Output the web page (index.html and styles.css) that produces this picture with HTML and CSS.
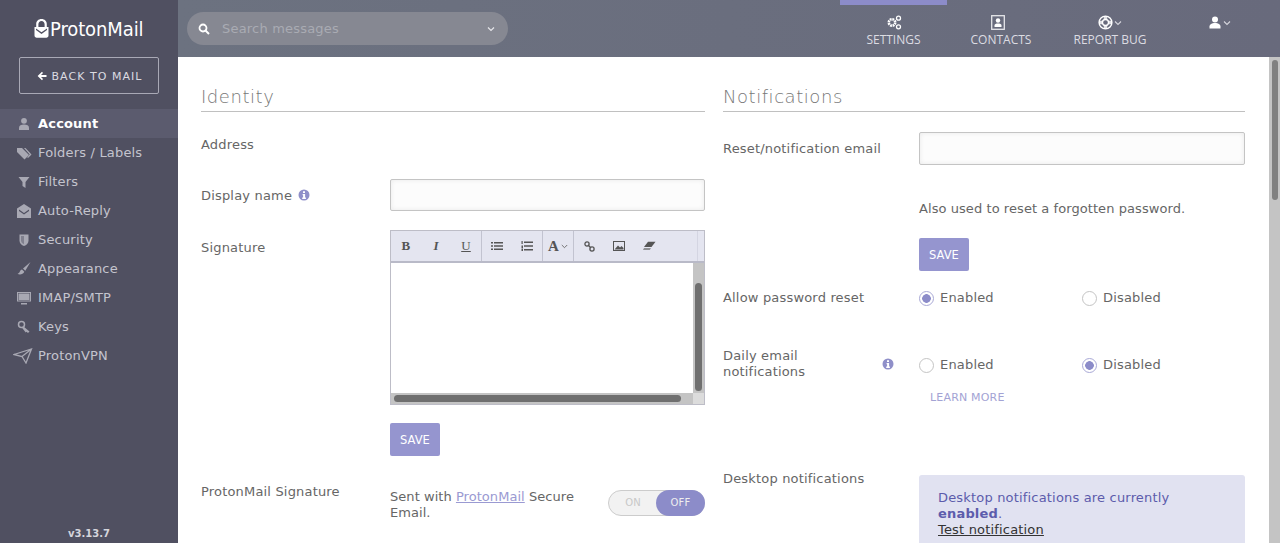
FILE: index.html
```html
<!DOCTYPE html>
<html lang="en">
<head>
    <meta charset="UTF-8">
    <title>ProtonMail Settings</title>
    <link rel="stylesheet" href="styles.css">
</head>
<body>
    <aside class="sidebar">
        <div class="logo">
            <svg class="logo-mark" width="15" height="19" viewBox="0 0 15 19"><path fill="#fff" d="M7.500 0C4.300 0 2.200 2.200 2.200 5.200V8H0.500v8.600C0.500 17.900 1.500 18.800 2.600 18.800h9.800c1.100 0 2.100-.9 2.100-2.200V8h-1.700V5.200C12.800 2.200 10.700 0 7.500 0zM4.400 5.300c0-1.900 1.300-3.200 3.100-3.200s3.100 1.300 3.100 3.200V8H4.400z"/><path fill="#505061" d="M2 9.500l5.500 3.800 5.500-3.800v1.500L7.500 15 2 11z"/></svg>
            <span>ProtonMail</span>
        </div>
        <a class="back-btn"><svg width="10" height="10" viewBox="0 0 10 10"><path fill="#fff" d="M5 .8L.6 5 5 9.200l1-1.200-2-2h5.500V4H4l2-2z"/></svg>BACK TO MAIL</a>
        <nav class="side-nav">
            <a class="side-item active"><svg width="16" height="14" viewBox="0 0 16 14"><circle cx="8" cy="3.800" r="2.900"/><path d="M3 13v-2.300C3 8.500 5.200 7.500 8 7.500s5 1 5 3.200V13z"/></svg>Account</a>
            <a class="side-item"><svg width="16" height="14" viewBox="0 0 16 14"><path d="M1 2h5l7 7-4.500 4.500L1 6z"/><path d="M8 2h1.500l6 6.500-3.500 3.500-.8-.8 2.500-2.700z"/></svg>Folders / Labels</a>
            <a class="side-item"><svg width="16" height="14" viewBox="0 0 16 14"><path d="M2.500 2h11L9.500 7v6l-3-2V7z"/></svg>Filters</a>
            <a class="side-item"><svg width="16" height="14" viewBox="0 0 16 14"><path d="M8 0L1 4.500V14h14V4.500zM3 5.500l5 3.500 5-3.500v1.500L8 10.500 3 7z" fill-rule="evenodd"/></svg>Auto-Reply</a>
            <a class="side-item"><svg width="16" height="14" viewBox="0 0 16 14"><path d="M3.500 1.500h9v6c0 3-2 4.500-4.500 5.500-2.500-1-4.500-2.500-4.500-5.500z"/><path fill="#505061" d="M8 3v8.300c-1.800-1-3-2-3-4V3z" opacity=".45"/></svg>Security</a>
            <a class="side-item"><svg width="16" height="14" viewBox="0 0 16 14"><path d="M14.500 0L7 6.500l2.300 2.300z"/><path d="M6 7.500c-2 .3-2 2.500-3 3.500-.6.600-1.500.8-1.500.8 1.500 1.200 5.500 1.200 6.800-2z"/></svg>Appearance</a>
            <a class="side-item"><svg width="16" height="14" viewBox="0 0 16 14"><path fill-rule="evenodd" d="M1 1h14v9.500H1zM2 2v7.500h12V2z"/><path d="M2.500 2.500h11v6.500h-11zM5 12h6v1.500H5z"/></svg>IMAP/SMTP</a>
            <a class="side-item"><svg width="16" height="14" viewBox="0 0 16 14"><circle cx="5.500" cy="4.500" r="3" fill="none" stroke="#a8a8b3" stroke-width="1.500"/><path d="M7.500 6.500l6 5-1.500 1.500-1.500-1.300-.8.700-3.500-4.500z"/></svg>Keys</a>
            <a class="side-item vpn"><svg width="20" height="16" viewBox="0 0 20 16"><path fill="none" stroke="#a8a8b3" stroke-width="1.300" d="M1 6.500L18.500 1 13 15 9 8.500zM9 8.500L18.500 1"/></svg>ProtonVPN</a>
        </nav>
        <div class="version">v3.13.7</div>
    </aside>

    <div class="right-side">
        <header class="topbar">
            <div class="search">
                <svg width="12" height="12" viewBox="0 0 12 12"><circle cx="5" cy="5" r="3.500" fill="none" stroke="#fff" stroke-width="1.800"/><path d="M7.500 7.500L11 11" stroke="#fff" stroke-width="2"/></svg>
                <span class="search-text">Search messages</span>
                <svg class="caret" width="8" height="6" viewBox="0 0 8 6"><path d="M1 1.500l3 3 3-3" fill="none" stroke="#e6e6ea" stroke-width="1.200"/></svg>
            </div>
            <nav class="top-nav">
                <a class="top-item selected">
                    <span class="top-icon"><svg width="16" height="15" viewBox="0 0 16 15"><circle cx="6" cy="7.500" r="3.200" fill="none" stroke="#fff" stroke-width="2.600" stroke-dasharray="1.800 .7"/><circle cx="12.500" cy="3.200" r="2" fill="none" stroke="#fff" stroke-width="1.300"/><circle cx="12.500" cy="11.800" r="2" fill="none" stroke="#fff" stroke-width="1.300"/></svg></span>
                    SETTINGS
                </a>
                <a class="top-item contacts">
                    <span class="top-icon icon-left"><svg width="14" height="15" viewBox="0 0 14 15"><rect x=".7" y=".7" width="12.600" height="13.600" fill="none" stroke="#e6e6ea" stroke-width="1.300"/><circle cx="7" cy="5.500" r="2.200" fill="#fff"/><path fill="#fff" d="M3.500 12v-1.500C3.500 9 5 8.500 7 8.500s3.500.5 3.500 2V12z"/></svg></span>
                    CONTACTS
                </a>
                <a class="top-item bug">
                    <span class="top-icon"><svg width="15" height="15" viewBox="0 0 15 15"><path d="M5.800 1h3.400v13H5.800zM1 5.800h13v3.400H1z" fill="#fff" opacity=".8"/><circle cx="7.500" cy="7.500" r="6.400" fill="none" stroke="#fff" stroke-width="1.400"/><circle cx="7.500" cy="7.500" r="3" fill="#686a7c" stroke="#fff" stroke-width="1.300"/></svg><svg width="8" height="6" viewBox="0 0 8 6"><path d="M1 1.500l3 3 3-3" fill="none" stroke="#d5d5dc" stroke-width="1.100"/></svg></span>
                    REPORT BUG
                </a>
                <a class="top-item user">
                    <span class="top-icon"><svg width="13" height="13" viewBox="0 0 13 13"><circle cx="6" cy="3.500" r="3" fill="#fff"/><path fill="#fff" d="M.5 12.500v-2c0-2 2.500-3.500 5.500-3.500s5.500 1.500 5.500 3.500v2z"/></svg><svg width="8" height="6" viewBox="0 0 8 6"><path d="M1 1.500l3 3 3-3" fill="none" stroke="#d5d5dc" stroke-width="1.100"/></svg></span>
                </a>
            </nav>
        </header>

        <div class="main-wrap">
            <main class="content">
                <section class="col col-left">
                    <h2>Identity</h2>
                    <div class="row row-address"><label>Address</label></div>
                    <div class="row row-name">
                        <label>Display name <svg class="info" width="12" height="12" viewBox="0 0 12 12"><circle cx="6" cy="6" r="5.500" fill="#8f8fc9"/><path fill="#fff" d="M5 2.200h2v1.700H5zM4.600 5h2.500v3.600h.8V10H4.200V8.600h.9V6.300h-.5z"/></svg></label>
                        <input class="text-input" type="text">
                    </div>
                    <div class="row row-sign">
                        <label>Signature</label>
                        <div>
                            <div class="editor">
                                <div class="toolbar">
                                    <div class="tool-group g1">
                                        <span class="tool tool-b">B</span>
                                        <span class="tool tool-i">I</span>
                                        <span class="tool tool-u">U</span>
                                    </div>
                                    <div class="tool-group g2">
                                        <span class="tool"><svg width="12" height="10" viewBox="0 0 12 10"><path fill="#555" d="M0 1h2v1.500H0zM3 1h9v1.500H3zM0 4.300h2v1.500H0zM3 4.300h9v1.500H3zM0 7.600h2v1.500H0zM3 7.600h9v1.500H3z"/></svg></span>
                                        <span class="tool"><svg width="12" height="12" viewBox="0 0 12 12"><path fill="#555" d="M3 1.500h9V3H3zM3 5.300h9v1.500H3zM3 9h9v1.500H3zM.5 1h1.200v3H.5zM.5 5.500h1.500v3H.5zM.5 9h1.500v2H.5z"/></svg></span>
                                    </div>
                                    <div class="tool-group g3">
                                        <span class="tool tool-a">A<svg width="7" height="5" viewBox="0 0 7 5"><path d="M.8 1l2.700 2.700L6.200 1" fill="none" stroke="#666" stroke-width=".9"/></svg></span>
                                    </div>
                                    <div class="tool-group g4">
                                        <span class="tool"><svg width="11" height="11" viewBox="0 0 11 11"><circle cx="3" cy="3" r="2.100" fill="none" stroke="#555" stroke-width="1.300"/><circle cx="8" cy="8" r="2.100" fill="none" stroke="#555" stroke-width="1.300"/><path d="M4 4l3 3" stroke="#555" stroke-width="1.300"/></svg></span>
                                        <span class="tool"><svg width="12" height="10" viewBox="0 0 12 10"><rect x=".5" y=".5" width="11" height="9" fill="none" stroke="#555"/><path fill="#555" d="M1.500 8.500L5 4.500l2 2 1.500-1.500 2 2v1.500z"/></svg></span>
                                        <span class="tool"><svg width="13" height="10" viewBox="0 0 13 10"><path fill="#555" d="M5 .8h7.500L8.500 6H1z"/><path fill="#555" d="M1 7h7L6.800 9H0z" opacity=".6"/></svg></span>
                                    </div>
                                </div>
                                <div class="edit-box">
                                    <div class="edit-area"></div>
                                    <div class="v-track"><div class="v-thumb"></div></div>
                                </div>
                                <div class="h-bar">
                                    <div class="h-track"><div class="h-thumb"></div></div>
                                    <div class="corner"></div>
                                </div>
                            </div>
                            <button class="save-btn save-sign">SAVE</button>
                        </div>
                    </div>
                    <div class="row row-pm">
                        <label>ProtonMail Signature</label>
                        <div class="pm-sign">
                            <p>Sent with <a class="link">ProtonMail</a> Secure<br>Email.</p>
                            <div class="toggle"><span class="toggle-on">ON</span><span class="toggle-off">OFF</span></div>
                        </div>
                    </div>
                </section>

                <section class="col col-right">
                    <h2>Notifications</h2>
                    <div class="row row-reset">
                        <label>Reset/notification email</label>
                        <div>
                            <input class="text-input" type="text">
                            <p class="hint">Also used to reset a forgotten password.</p>
                            <button class="save-btn">SAVE</button>
                        </div>
                    </div>
                    <div class="row row-allow">
                        <label>Allow password reset</label>
                        <div class="radios">
                            <span class="radio-item"><i class="radio checked"></i>Enabled</span>
                            <span class="radio-item"><i class="radio"></i>Disabled</span>
                        </div>
                    </div>
                    <div class="row row-daily">
                        <label class="daily-label"><span>Daily email notifications</span><svg class="info" width="12" height="12" viewBox="0 0 12 12"><circle cx="6" cy="6" r="5.500" fill="#8f8fc9"/><path fill="#fff" d="M5 2.200h2v1.700H5zM4.600 5h2.500v3.600h.8V10H4.200V8.600h.9V6.300h-.5z"/></svg></label>
                        <div>
                            <div class="radios">
                                <span class="radio-item"><i class="radio"></i>Enabled</span>
                                <span class="radio-item"><i class="radio checked"></i>Disabled</span>
                            </div>
                            <a class="learn">LEARN MORE</a>
                        </div>
                    </div>
                    <div class="row row-desktop">
                        <label>Desktop notifications</label>
                        <div class="notice">
                            Desktop notifications are currently <b>enabled</b>.<br>
                            <a class="test-link">Test notification</a>
                        </div>
                    </div>
                </section>
            </main>
            <div class="page-scroll"><div class="page-thumb"></div></div>
        </div>
    </div>
</body>
</html>
```

FILE: styles.css
```css
* {
    box-sizing: border-box;
}

html, body {
    height: 100%;
}

body {
    margin: 0;
    display: flex;
    overflow: hidden;
    font-family: "DejaVu Sans", sans-serif;
    font-size: 13px;
    letter-spacing: 0.18px;
    color: #666;
    background: #fff;
}

/* sidebar */
.sidebar {
    position: relative;
    width: 178px;
    flex: none;
    background: #505061;
    color: #c4c4ce;
}

.logo {
    display: flex;
    align-items: center;
    gap: 1px;
    height: 57px;
    padding: 0 0 0 34px;
    color: #fff;
    font-size: 20px;
    font-stretch: condensed;
    letter-spacing: -0.1px;
}

.back-btn {
    display: flex;
    align-items: center;
    justify-content: center;
    gap: 4px;
    width: 140px;
    height: 37px;
    margin-left: 19px;
    padding: 1px 0 0 2px;
    border: 1px solid #a9a9b6;
    border-radius: 2px;
    color: #dcdce2;
    font-size: 11px;
    letter-spacing: 1.05px;
}

.side-nav {
    margin-top: 15px;
}

.side-item {
    display: flex;
    align-items: center;
    height: 29px;
    padding-left: 16px;
}

.side-item svg {
    width: 16px;
    margin-right: 6px;
    fill: #a8a8b3;
}

.side-item.active {
    background: #5b5b6e;
    color: #fff;
    font-weight: bold;
}

.side-item.vpn {
    padding-left: 13px;
}

.side-item.vpn svg {
    width: 20px;
    margin-right: 5px;
}

.version {
    position: absolute;
    left: 0;
    right: 0;
    bottom: 4px;
    text-align: center;
    font-size: 10px;
    font-weight: bold;
    letter-spacing: 0;
    color: #d5d5dc;
}

/* top bar */
.right-side {
    flex: 1;
    min-width: 0;
    display: flex;
    flex-direction: column;
}

.topbar {
    flex: none;
    height: 57px;
    display: flex;
    justify-content: space-between;
    padding-left: 9px;
    background: linear-gradient(90deg, #6c7280, #686a7c);
}

.search {
    display: flex;
    align-items: center;
    width: 321px;
    height: 33px;
    margin-top: 12px;
    padding: 0 13px 0 11px;
    border-radius: 17px;
    background: #868892;
}

.search-text {
    flex: 1;
    margin-left: 12px;
    letter-spacing: 0.2px;
    color: #a9abb3;
}

.top-nav {
    display: flex;
}

.top-item {
    display: flex;
    flex-direction: column;
    align-items: center;
    padding-top: 15px;
    color: #dcdce2;
    font-family: "Open Sans", sans-serif;
    font-size: 12px;
    letter-spacing: 0;
    line-height: 14px;
}

.top-icon {
    display: flex;
    align-items: center;
    gap: 1px;
    height: 15px;
    margin-bottom: 3px;
}

.top-item.selected {
    width: 107px;
    border-top: 5px solid #8c8cc9;
    padding-top: 10px;
}

.top-item.contacts {
    width: 108px;
}

.icon-left {
    margin-right: 6px;
}

.top-item.bug {
    width: 110px;
}

.top-item.user {
    width: 115px;
    padding-right: 5px;
}

/* content */
.main-wrap {
    flex: 1;
    min-height: 0;
    display: flex;
}

.content {
    flex: 1;
    display: flex;
    gap: 18px;
    overflow: hidden;
    padding: 27px 0 0 23px;
}

.page-scroll {
    flex: none;
    width: 11px;
    padding: 3px 2px 0 3px;
    background: #c4c4c4;
}

.page-thumb {
    height: 140px;
    background: #808080;
    border-radius: 3px;
}

.col-left {
    flex: none;
    width: 504px;
}

.col-right {
    flex: none;
    width: 522px;
}

h2 {
    margin: 0;
    height: 28px;
    padding-top: 2px;
    font-size: 18px;
    line-height: 22px;
    font-weight: 200;
    letter-spacing: 0.55px;
    color: #777;
    border-bottom: 1px solid #c0c0c0;
}

.row {
    display: grid;
    grid-template-columns: 189px 1fr;
}

.col-right .row {
    grid-template-columns: 196px 1fr;
}

label {
    display: block;
    line-height: 16px;
}

.text-input {
    display: block;
    width: 100%;
    height: 32px;
    border: 1px solid #c4c4c4;
    border-radius: 2px;
    background: #fcfcfc;
    box-shadow: inset 0 0 5px rgba(0,0,0,0.08);
}

.info {
    vertical-align: -1px;
    margin-left: 2px;
}

.row-address {
    margin-top: 25px;
    height: 34px;
}

.row-name {
    margin-top: 8px;
}

.row-name label {
    padding-top: 9px;
}

.row-sign {
    margin-top: 19px;
}

.row-sign label {
    padding-top: 10px;
}

/* signature editor */
.editor {
    height: 175px;
    border: 1px solid #bdbdc7;
    display: flex;
    flex-direction: column;
}

.toolbar {
    display: flex;
    height: 32px;
    flex: none;
    background: #e4e5f0;
    border-bottom: 2px solid #b9bac8;
}

.tool-group {
    display: flex;
    border-right: 1px solid #c2c3d0;
}

.g1 {
    width: 91px;
}

.g2 {
    width: 61px;
}

.g3 {
    width: 31px;
}

.g4 {
    width: 124px;
    border-right-color: #d4d5e2;
}

.tool {
    flex: 1;
    display: flex;
    align-items: center;
    justify-content: center;
    color: #555;
    font-family: "Liberation Serif", serif;
    font-size: 13px;
}

.g4 .tool {
    flex: none;
    width: 30px;
}

.tool-b {
    font-weight: bold;
}

.tool-i {
    font-style: italic;
    font-weight: bold;
}

.tool-u {
    text-decoration: underline;
}

.tool-a {
    gap: 2px;
    font-size: 15px;
    font-weight: bold;
}

.edit-box {
    flex: 1;
    display: flex;
    min-height: 0;
}

.edit-area {
    flex: 1;
    background: #fff;
}

.v-track {
    width: 11px;
    padding: 20px 2px 2px;
    background: #c4c4c4;
}

.v-thumb {
    height: 100%;
    background: #6f6f6f;
    border-radius: 4px;
}

.h-bar {
    flex: none;
    display: flex;
    height: 11px;
}

.h-track {
    flex: 1;
    padding: 2px 2px 2px 3px;
    background: #c4c4c4;
}

.h-thumb {
    width: 287px;
    height: 100%;
    background: #6f6f6f;
    border-radius: 4px;
}

.corner {
    width: 11px;
    background: #dcdcdc;
}

.save-btn {
    display: block;
    width: 50px;
    height: 33px;
    padding: 0;
    border: none;
    border-radius: 2px;
    background: #9595cf;
    color: #fff;
    font-family: inherit;
    font-size: 11.5px;
}

.save-sign {
    margin-top: 18px;
}

.row-pm {
    margin-top: 28px;
}

.pm-sign {
    display: flex;
    align-items: flex-start;
    justify-content: space-between;
}

.pm-sign p {
    margin: 0;
    padding-top: 5px;
    line-height: 16px;
    letter-spacing: 0.05px;
}

.link {
    color: #9a9ad2;
    text-decoration: underline;
}

.toggle {
    display: flex;
    width: 97px;
    height: 26px;
    margin-top: 6px;
    border: 1px solid #ccc;
    border-radius: 13px;
    background: #f2f2f2;
    font-size: 10px;
    line-height: 24px;
    text-align: center;
    color: #c8c8c8;
}

.toggle-on {
    width: 48px;
}

.toggle-off {
    width: 49px;
    height: 26px;
    margin: -1px;
    line-height: 26px;
    border-radius: 13px;
    background: #8c8cc9;
    color: #eee;
}

/* notifications column */
.row-reset {
    margin-top: 20px;
}

.row-reset label {
    padding-top: 9px;
}

.row-reset .text-input {
    height: 33px;
}

.hint {
    margin: 36px 0 21px;
    line-height: 16px;
    letter-spacing: 0.07px;
}

.row-allow {
    margin-top: 19px;
}

.radios {
    display: grid;
    grid-template-columns: 163px 1fr;
    line-height: 16px;
}

.radio-item {
    display: flex;
    align-items: center;
    gap: 6px;
}

.radio {
    width: 15px;
    height: 15px;
    border: 1px solid #c4c4c4;
    border-radius: 50%;
    background: #fff;
}

.radio.checked {
    border-color: #a9a9d6;
    background: radial-gradient(circle, #8c8cc9 0 4px, #fff 4.6px);
}

.row-daily {
    margin-top: 42px;
}

.daily-label {
    display: flex;
    align-items: center;
    justify-content: space-between;
    align-self: start;
    height: 32px;
    padding-right: 25px;
}

.daily-label span {
    width: 110px;
}

.row-daily .radios {
    padding-top: 9px;
}

.learn {
    display: block;
    margin: 17px 0 0 11px;
    color: #a3a3d4;
    font-size: 11px;
    line-height: 16px;
}

.row-desktop {
    margin-top: 69px;
}

.row-desktop label {
    margin-top: -4px;
}

.notice {
    height: 100px;
    padding: 15px 19px;
    border-radius: 3px;
    background: #e1e2f1;
    color: #5c5cac;
    line-height: 16px;
}

.test-link {
    color: #333;
    text-decoration: underline;
}
```
